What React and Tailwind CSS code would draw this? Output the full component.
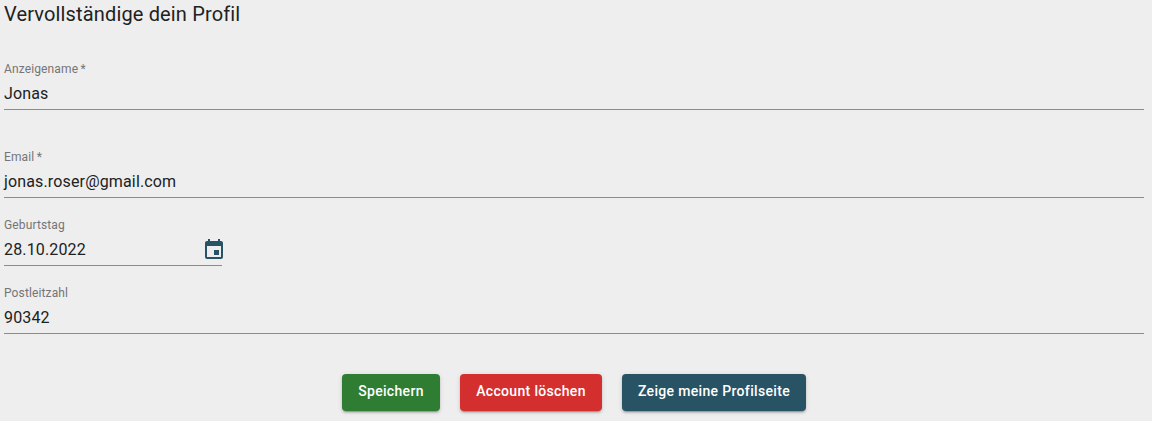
import { MdEvent } from "react-icons/md";

function Field({ label, value, required = false, className = "", children }) {
  return (
    <div className={`h-[52px] border-b border-[#8b8b8b] ${className}`}>
      <label className="block pt-1 text-[12px] leading-[14px] tracking-[0.13px] text-[#757575]">
        {label}
        {required && <span className="tracking-[-0.6px]"> *</span>}
      </label>
      <div className="mt-2 flex h-5 items-center justify-between text-[16px] leading-5 tracking-[0.15px] text-[#212121]">
        <span>{value}</span>
        {children}
      </div>
    </div>
  );
}

function Button({ className, children }) {
  return (
    <button
      className={`flex h-[37px] items-center justify-center rounded-[4px] pb-[3px] text-[14px] leading-6 font-medium tracking-[0.33px] text-white shadow-[0px_3px_1px_-2px_rgba(0,0,0,0.2),0px_2px_2px_0px_rgba(0,0,0,0.14),0px_1px_5px_0px_rgba(0,0,0,0.12)] ${className}`}
    >
      {children}
    </button>
  );
}

export default function App() {
  return (
    <main className="h-[421px] overflow-hidden bg-[#eeeeee] pr-2 pl-1 font-[Roboto,sans-serif]">
      <h1 className="h-[58px] text-[20px] leading-[29px] tracking-[0.15px] text-[#212121]">
        Vervollständige dein Profil
      </h1>
      <Field label="Anzeigename" required value="Jonas" />
      <Field label="Email" required value="jonas.roser@gmail.com" className="mt-9" />
      <Field label="Geburtstag" value="28.10.2022" className="mt-4 w-[218px]">
        <MdEvent className="mr-[-4px] size-6 shrink-0 text-[#285365]" />
      </Field>
      <Field label="Postleitzahl" value="90342" className="mt-4" />
      <div className="mt-10 flex justify-center gap-5">
        <Button className="w-[98px] bg-[#2e7d32]">Speichern</Button>
        <Button className="w-[142px] bg-[#d32f2f]">Account löschen</Button>
        <Button className="w-[184px] bg-[#285365]">Zeige meine Profilseite</Button>
      </div>
    </main>
  );
}
